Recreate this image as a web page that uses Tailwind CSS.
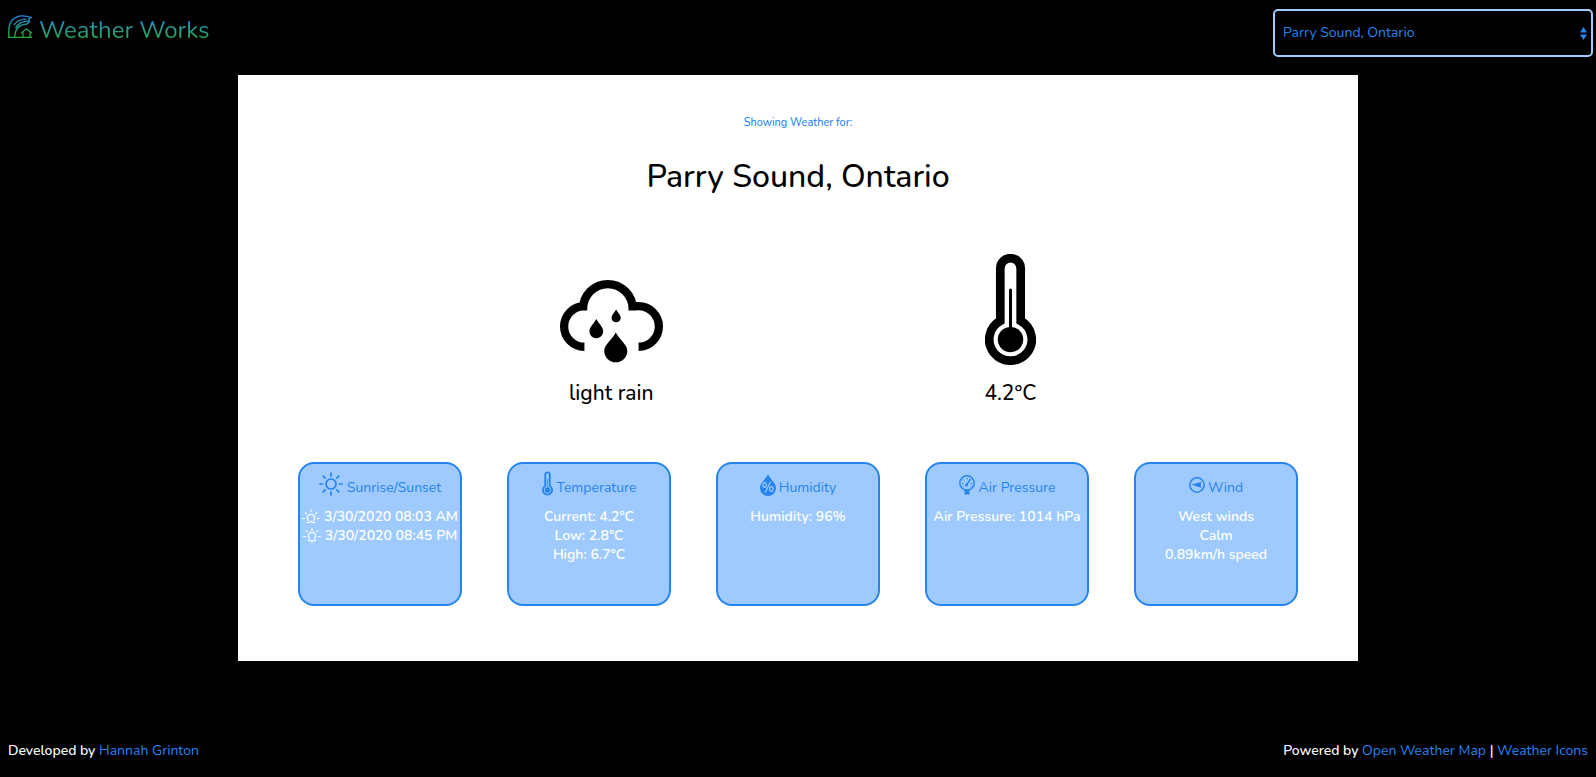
<!DOCTYPE html>
<html lang="en">
<head>
<meta charset="utf-8">
<title>Weather Works</title>
<script src="https://cdn.jsdelivr.net/npm/@tailwindcss/browser@4"></script>
</head>
<body class="min-h-screen bg-black flex flex-col font-['Nunito','Lato',sans-serif] text-[14px] leading-[19px]">
<svg class="hidden" aria-hidden="true">
  <symbol id="thermometer" viewBox="76 43 152 332">
    <path d="M121.500 243V86A30.500 30.500 0 0 1 182.500 86V243A63.500 63.500 0 1 1 121.500 243Z" fill="none" stroke="currentColor" stroke-width="26"/>
    <circle cx="152" cy="299" r="38" fill="currentColor"/>
    <path d="M152 151V290" stroke="currentColor" stroke-width="9" stroke-linecap="round"/>
  </symbol>
</svg>

<header class="flex justify-between items-start pl-2 pr-[3px] pt-[9px] h-[75px]">
  <a href="#" class="flex items-start gap-[7px] pt-[6px]">
    <svg class="w-6 h-6" viewBox="0 0 24 24" fill="none" stroke="url(#brand)" stroke-width="1.300" aria-hidden="true">
      <defs><linearGradient id="brand" gradientUnits="userSpaceOnUse" x1="0" y1="0" x2="0" y2="24"><stop offset="0" stop-color="#2684ee"/><stop offset="1" stop-color="#22b522"/></linearGradient></defs>
      <path d="M0 22.300H24M.8 22V15C.8 6 7 .8 14 .8C18 .8 21 1.500 23.500 2.500L20.700 3.800L21.500 6.200C16.500 6 10.500 8 7.500 13M6 10C9 6 13 4 18.500 4.200M6.800 22C7 14 11 9.500 19 9L21.500 6.200M13 18L18.500 14L24 18M15 17.500V22M22 17.500V22"/>
    </svg>
    <h1 class="text-[24px] leading-[30px] bg-linear-to-b/srgb from-[#2684ee] to-[#22b522] bg-clip-text text-transparent">Weather Works</h1>
  </a>
  <div class="relative w-80">
    <select aria-label="City" class="appearance-none w-full h-12 rounded-[5px] border-2 border-[#9ecaff] bg-black text-[#2684ee] pl-2 pr-6 pb-[2px]">
      <option>Parry Sound, Ontario</option>
    </select>
    <svg class="absolute right-[6px] top-[18px] w-[7px] h-[13px] pointer-events-none" viewBox="0 0 7 13" fill="#2684ee" aria-hidden="true"><path d="M3.500 0L7 5.500H0ZM3.500 13L7 7.500H0Z"/></svg>
  </div>
</header>

<main class="bg-white w-full max-w-[1120px] mx-auto h-[586px] flex flex-col text-center">
  <p class="mt-10 text-[11px] leading-4 text-[#0d7bf5]">Showing Weather for:</p>
  <h2 class="mt-[25px] text-[32px] leading-[42px] font-medium">Parry Sound, Ontario</h2>
  <section class="mt-14 flex justify-evenly items-end text-[21px] leading-7 font-medium">
    <div class="flex flex-col items-center gap-4">
      <svg class="w-[103px] h-[84px]" viewBox="59 116 312 252" aria-hidden="true">
        <path d="M141 197H133A61.500 61.500 0 0 0 133 320M129 210V205A75 75 0 0 1 279 205V210M267 197H297A61.500 61.500 0 0 1 297 320" fill="none" stroke="#000" stroke-width="25"/>
        <path d="M169 236C176 249 190 261 190 273A21 21 0 0 1 148 273C148 261 162 249 169 236ZM229 207C234 216 243 224 243 232A14 14 0 0 1 215 232C215 224 224 216 229 207ZM228 277C239 299 263 314 263 332A35 35 0 0 1 193 332C193 314 217 299 228 277Z"/>
      </svg>
      <p>light rain</p>
    </div>
    <div class="flex flex-col items-center gap-[14px]">
      <svg class="w-[51px] h-[111px]" aria-hidden="true"><use href="#thermometer"/></svg>
      <p>4.2°C</p>
    </div>
  </section>
  <section class="mt-[55px] px-[60px] grid grid-cols-5 gap-[45px] font-semibold text-white">
    <article class="h-36 rounded-2xl border-2 border-[#2684ee] bg-[#9ecaff] pt-[7px] whitespace-nowrap">
      <h3 class="flex items-end justify-center gap-1 h-[26px] mb-[10px] font-normal text-[#2684ee]">
        <svg class="w-6 h-6 mb-px" viewBox="0 0 24 24" fill="none" stroke="currentColor" stroke-width="1.700" stroke-linecap="round" aria-hidden="true"><circle cx="12" cy="12" r="5"/><path d="M12 1V4M12 20V23M1 12H3.500M20.500 12H23M4.200 4.200L6.200 6.200M17.800 17.800L19.800 19.800M4.200 19.800L6.200 17.800M17.800 6.200L19.800 4.200"/></svg>
        Sunrise/Sunset</h3>
      <p class="flex items-center justify-center gap-1">
        <svg class="w-[18px] h-[15px] shrink-0" viewBox="0 0 18 15" fill="none" stroke="currentColor" stroke-width="1.200" stroke-linecap="round" aria-hidden="true"><path d="M.7 9.500H2.700M15.300 9.500H17.300M9 .7V2.500M3.300 3.700L4.400 4.800M14.700 3.700L13.600 4.800M6.500 11.500A3.600 3.600 0 1 1 11.500 11.500M5 13.500H7.500L9 12.200L10.500 13.500H13"/></svg>
        3/30/2020 08:03 AM</p>
      <p class="flex items-center justify-center gap-1">
        <svg class="w-[18px] h-[15px] shrink-0" viewBox="0 0 18 15" fill="none" stroke="currentColor" stroke-width="1.200" stroke-linecap="round" aria-hidden="true"><path d="M.7 8.500H2.700M15.300 8.500H17.300M9 .7V2.500M3.300 2.700L4.400 3.800M14.700 2.700L13.600 3.800M6.500 10.500A3.600 3.600 0 1 1 11.500 10.500M5 12.300H7.500L9 13.800L10.500 12.300H13"/></svg>
        3/30/2020 08:45 PM</p>
    </article>
    <article class="h-36 rounded-2xl border-2 border-[#2684ee] bg-[#9ecaff] pt-[7px] whitespace-nowrap">
      <h3 class="flex items-end justify-center gap-1 h-[26px] mb-[10px] font-normal text-[#2684ee]">
        <svg class="w-[11px] h-[25px] mb-px" aria-hidden="true"><use href="#thermometer"/></svg>
        Temperature</h3>
      <p>Current: 4.2°C</p>
      <p>Low: 2.8°C</p>
      <p>High: 6.7°C</p>
    </article>
    <article class="h-36 rounded-2xl border-2 border-[#2684ee] bg-[#9ecaff] pt-[7px] whitespace-nowrap">
      <h3 class="flex items-end justify-center gap-[3px] h-[26px] mb-[10px] font-normal text-[#2684ee]">
        <svg class="w-4 h-[22px] mb-px" viewBox="0 0 16 22" aria-hidden="true"><path d="M8 0C10 5 16 9 16 14A8 8 0 0 1 0 14C0 9 6 5 8 0Z" fill="currentColor"/><g fill="none" stroke="#9ecaff" stroke-width="1.200"><ellipse cx="4.600" cy="11" rx="1.700" ry="2.400"/><ellipse cx="11.400" cy="15" rx="1.700" ry="2.400"/><path d="M10.800 7.500L5.200 18.500"/></g></svg>
        Humidity</h3>
      <p>Humidity: 96%</p>
    </article>
    <article class="h-36 rounded-2xl border-2 border-[#2684ee] bg-[#9ecaff] pt-[7px] whitespace-nowrap">
      <h3 class="flex items-end justify-center gap-1 h-[26px] mb-[10px] font-normal text-[#2684ee]">
        <svg class="w-4 h-5 mb-[2px]" viewBox="0 0 16 20" fill="none" stroke="currentColor" aria-hidden="true"><circle cx="8" cy="8" r="7.200" stroke-width="1.500"/><path d="M5.500 14.500V19.500H10.500V14.500Z" fill="currentColor" stroke="none"/><path d="M2.800 8.500H4.500M11.500 8.500H13.200M8 2.800V4.500M4.200 4.500L5.400 5.700M4 12L5 11.300M12 12L11 11.300" stroke-width="1"/><path d="M7.500 10L11.500 4" stroke-width="1.400"/><circle cx="7.500" cy="10" r="1.500" fill="currentColor" stroke="none"/></svg>
        Air Pressure</h3>
      <p>Air Pressure: 1014 hPa</p>
    </article>
    <article class="h-36 rounded-2xl border-2 border-[#2684ee] bg-[#9ecaff] pt-[7px] whitespace-nowrap">
      <h3 class="flex items-end justify-center gap-[3px] h-[26px] mb-[10px] font-normal text-[#2684ee]">
        <svg class="w-4 h-4 mb-1" viewBox="0 0 16 16" aria-hidden="true"><circle cx="8" cy="8" r="7.200" fill="none" stroke="currentColor" stroke-width="1.500"/><path d="M2.500 7.500L12.500 5L11.700 8L12.500 11Z" fill="currentColor"/></svg>
        Wind</h3>
      <p>West winds</p>
      <p>Calm</p>
      <p>0.89km/h speed</p>
    </article>
  </section>
</main>

<footer class="mt-auto flex justify-between px-2 pb-[17px] font-medium text-white">
  <p>Developed by <a href="#" class="font-normal text-[#2684ee]">Hannah Grinton</a></p>
  <p>Powered by <a href="#" class="font-normal text-[#2684ee]">Open Weather Map</a> | <a href="#" class="font-normal text-[#2684ee]">Weather Icons</a></p>
</footer>
</body>
</html>
